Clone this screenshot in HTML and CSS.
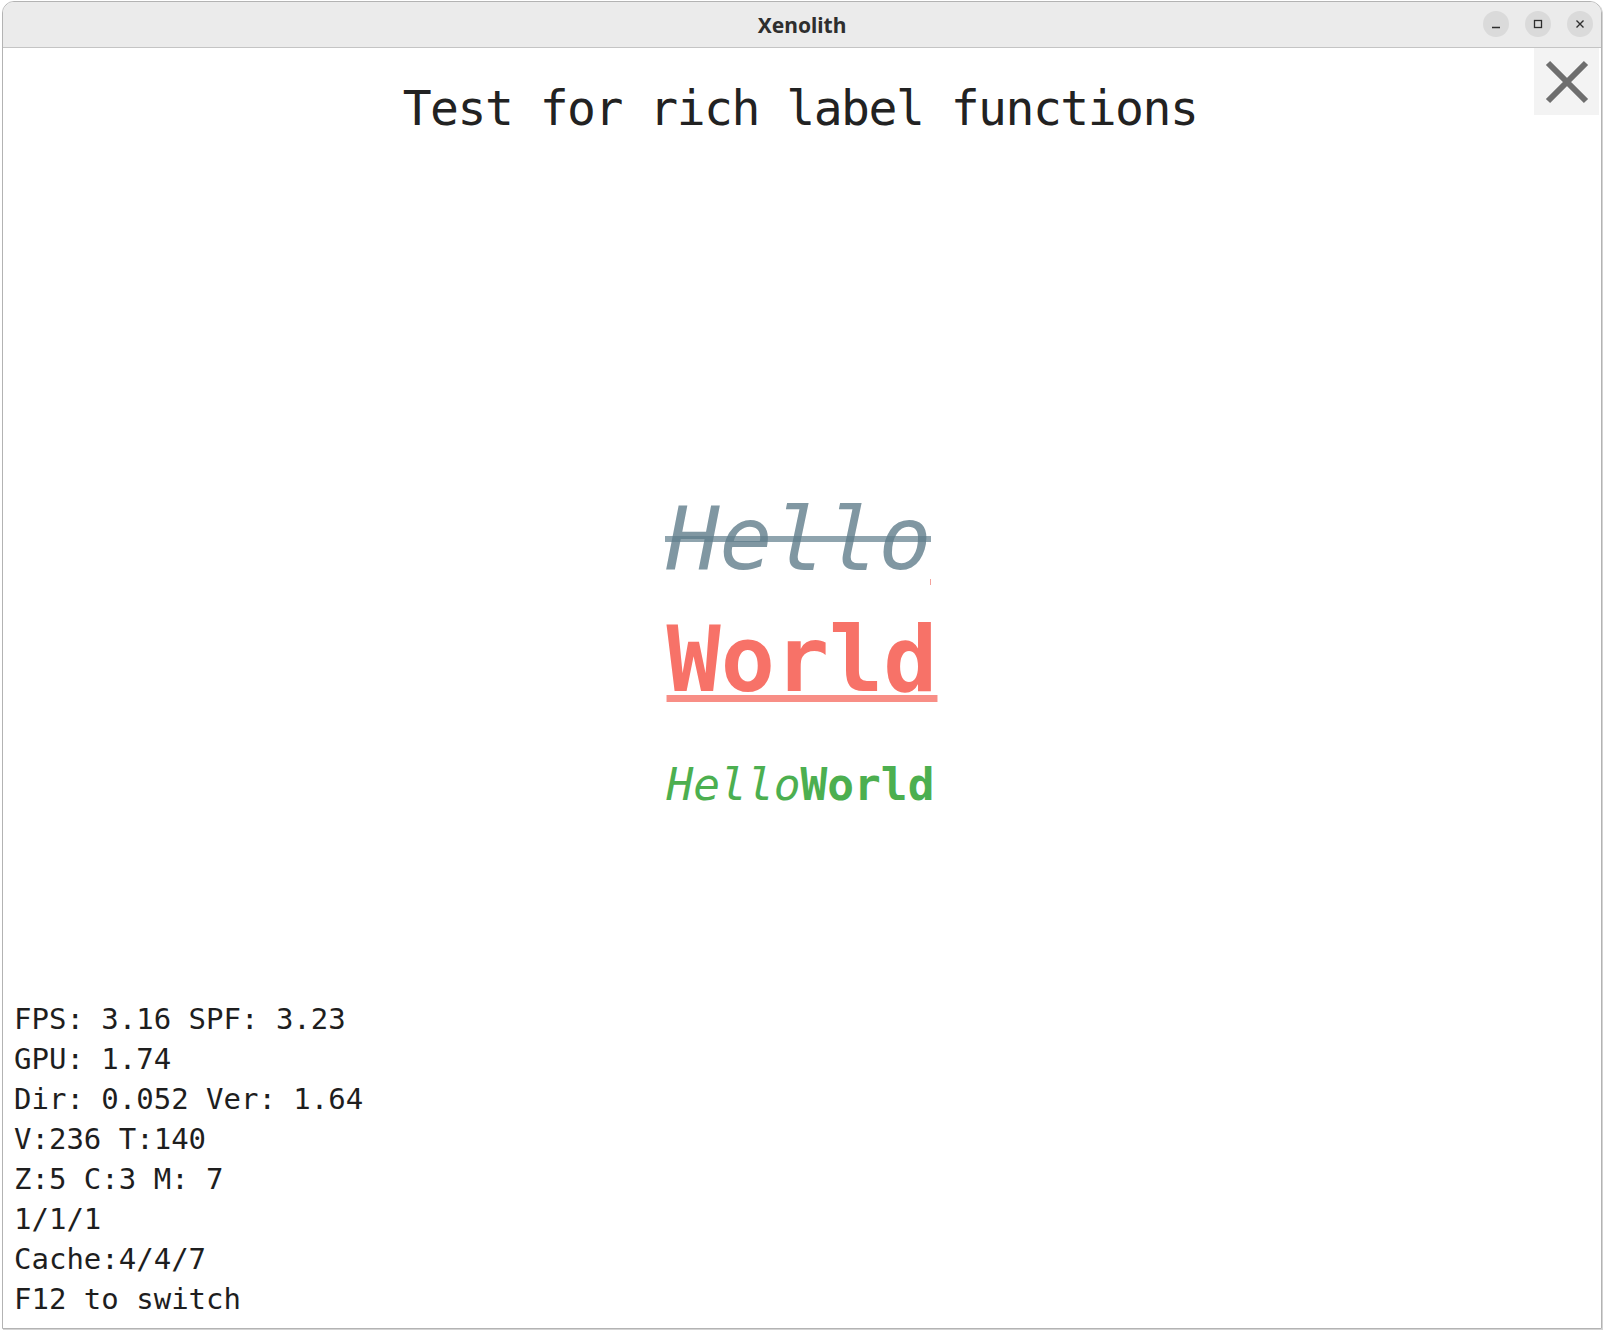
FILE: index.html
```html
<!DOCTYPE html>
<html lang="en">
<head>
    <meta charset="UTF-8">
    <meta name="viewport" content="width=device-width, initial-scale=1.0">
    <title>Xenolith</title>
    <link rel="stylesheet" href="styles.css">
</head>
<body>
    <div class="window">
        <div class="titlebar">
            <span class="title">Xenolith</span>
            <div class="controls">
                <span class="ctl">
                    <svg width="10" height="10" viewBox="0 0 10 10"><path d="M1 8.5h8" stroke="#2e2e2e" stroke-width="1.4"/></svg>
                </span>
                <span class="ctl">
                    <svg width="10" height="10" viewBox="0 0 10 10"><rect x="1.5" y="1.5" width="7" height="7" fill="none" stroke="#2e2e2e" stroke-width="1.3"/></svg>
                </span>
                <span class="ctl">
                    <svg width="10" height="10" viewBox="0 0 10 10"><path d="M1.5 1.5l7 7M8.5 1.5l-7 7" stroke="#2e2e2e" stroke-width="1.4"/></svg>
                </span>
            </div>
        </div>

        <div class="scene">
            <button class="close-scene">
                <svg width="44" height="44" viewBox="0 0 44 44"><path d="M3 3l38 38M41 3L3 41" stroke="#6e6e6e" stroke-width="6"/></svg>
            </button>

            <h1 class="heading">Test for rich label functions</h1>

            <div class="labels">
                <div class="label-hello">Hello<span class="caret"></span></div>
                <div class="label-world">World</div>
                <div class="label-mixed"><i>Hello</i><b>World</b></div>
            </div>

            <!-- frame counters -->
            <div class="stats">
                <div>FPS: 3.16 SPF: 3.23</div>
                <div>GPU: 1.74</div>
                <div>Dir: 0.052 Ver: 1.64</div>
                <div>V:236 T:140</div>
                <div>Z:5 C:3 M: 7</div>
                <div>1/1/1</div>
                <div>Cache:4/4/7</div>
                <div>F12 to switch</div>
            </div>
        </div>
    </div>
</body>
</html>
```

FILE: styles.css
```css
* {
    margin: 0;
    padding: 0;
    box-sizing: border-box;
}

body {
    background: #fff;
    padding: 1px 1px 1px 2px;
    font-family: 'DejaVu Sans Mono', monospace;
}

.window {
    width: 1600px;
    height: 1328px;
    border: 1px solid #b3b3b3;
    border-radius: 12px 12px 0 0;
    box-shadow: 1px 1px 0 #d4d4d4;
    overflow: hidden;
    display: flex;
    flex-direction: column;
}

.titlebar {
    height: 46px;
    flex-shrink: 0;
    background: #ebebeb;
    border-bottom: 1px solid #c4c4c4;
    position: relative;
    display: flex;
    align-items: center;
    justify-content: center;
}

.title {
    font-family: 'Noto Sans', sans-serif;
    font-weight: 700;
    font-size: 21px;
    color: #2e2e2e;
}

.controls {
    position: absolute;
    right: 8px;
    top: 9px;
    display: flex;
    gap: 16px;
}

.ctl {
    width: 26px;
    height: 26px;
    border-radius: 50%;
    background: #dadada;
    display: flex;
    align-items: center;
    justify-content: center;
}

.scene {
    flex: 1;
    background: #fff;
    position: relative;
    display: flex;
    flex-direction: column;
    align-items: center;
}

.close-scene {
    position: absolute;
    top: 0;
    right: 2px;
    width: 65px;
    height: 67px;
    border: none;
    background: #f3f3f3;
    display: flex;
    align-items: center;
    justify-content: center;
}

.heading {
    margin-top: 36px;
    margin-right: 4px;
    font-weight: 400;
    font-size: 48px;
    line-height: 1;
    letter-spacing: -1.5px;
    color: #222;
}

.labels {
    margin-top: 363px;
    display: flex;
    flex-direction: column;
    align-items: flex-start;
}

.label-hello {
    position: relative;
    font-size: 88px;
    line-height: 1;
    font-style: italic;
    color: rgba(96, 125, 139, 0.8);
}

/* strike line drawn on its own so it darkens over the glyphs */
.label-hello::after {
    content: "";
    position: absolute;
    left: -2px;
    right: 0;
    top: 41px;
    height: 6px;
    background: rgba(96, 125, 139, 0.7);
}

.caret {
    position: absolute;
    right: 0;
    top: 84px;
    width: 1px;
    height: 6px;
    background: #f4a29c;
}

.label-world {
    margin-top: 32px;
    font-size: 90px;
    line-height: 1;
    font-weight: 700;
    color: rgba(244, 67, 54, 0.75);
    text-decoration: underline;
    text-decoration-color: rgba(244, 67, 54, 0.6);
    text-decoration-thickness: 7px;
    text-underline-offset: 4px;
    text-decoration-skip-ink: none;
}

.label-mixed {
    margin-top: 58px;
    font-size: 44.5px;
    line-height: 1;
    color: #4caf50;
}

.label-mixed i {
    font-style: italic;
}

.label-mixed b {
    font-weight: 700;
}

.stats {
    margin-top: auto;
    align-self: stretch;
    padding: 0 0 9px 11px;
    font-size: 29px;
    line-height: 40px;
    color: #1e1e1e;
}
```
